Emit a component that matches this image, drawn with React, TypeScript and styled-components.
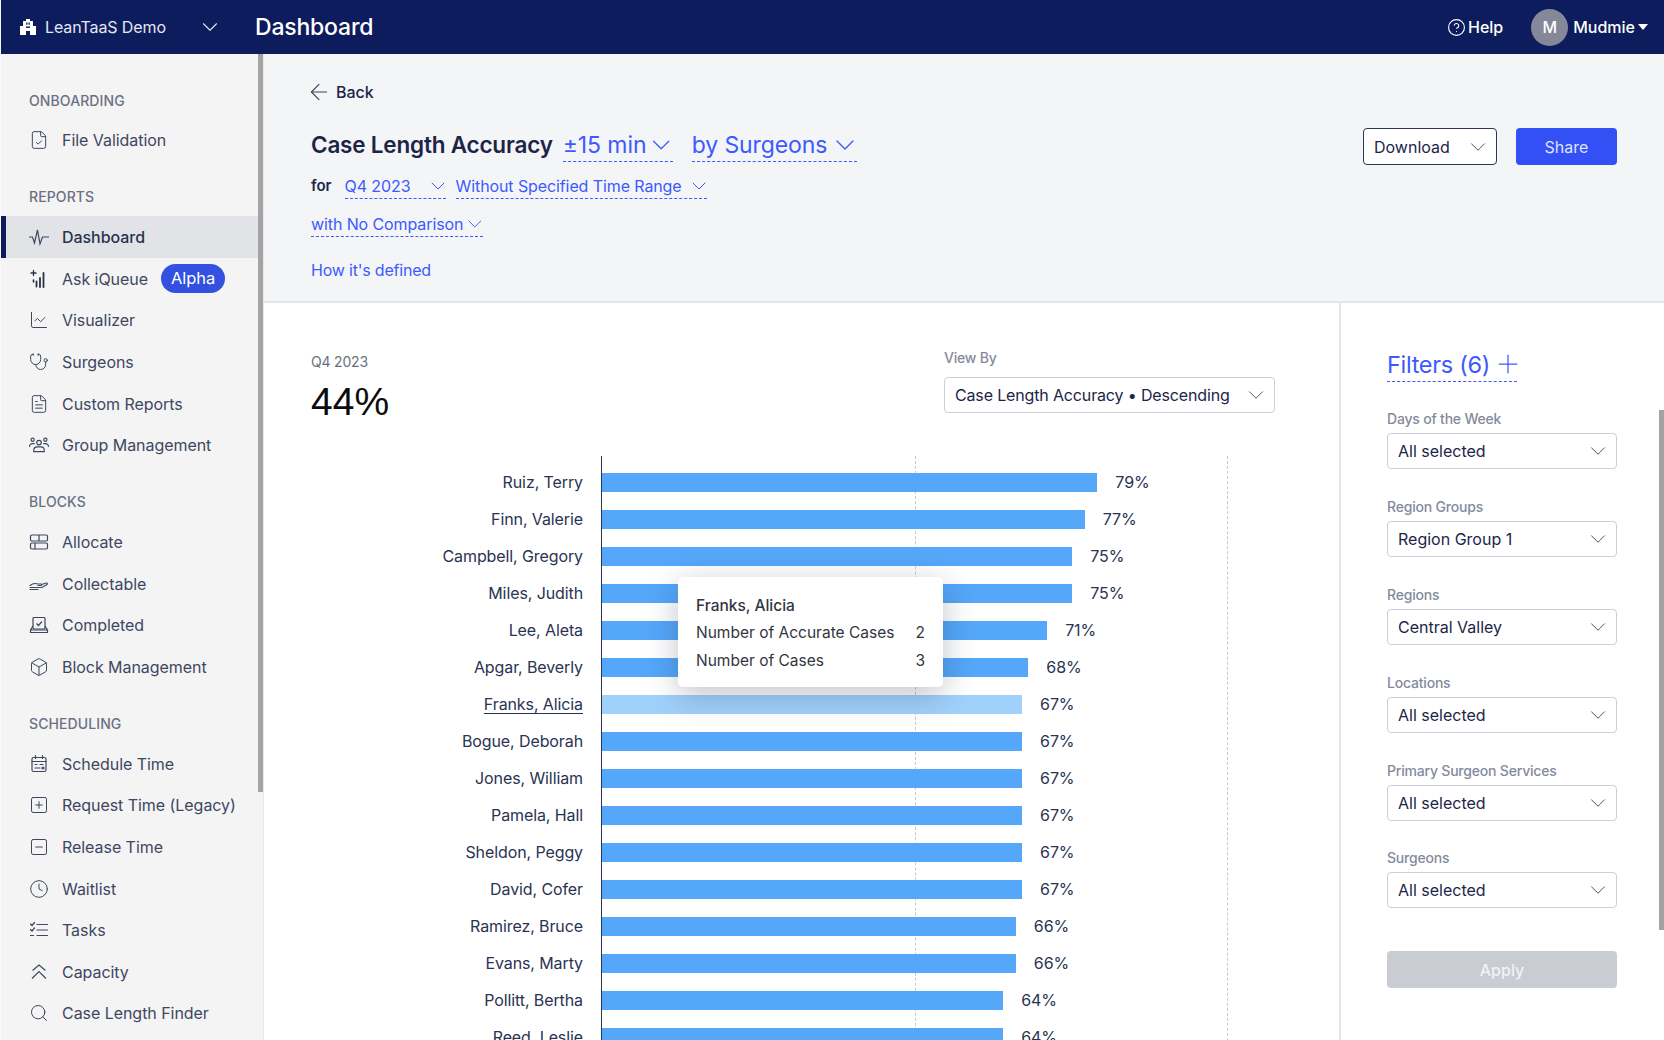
import styled, { createGlobalStyle } from "styled-components";
import {
  ArrowLeft,
  Box,
  ChartLine,
  ChevronDown,
  CircleHelp,
  Clock,
  FileCheck,
  FileText,
  Plus,
  Search,
  SquareMinus,
  SquarePlus,
  Stethoscope,
} from "lucide-react";
import type { ReactNode } from "react";

const PX_PER_PERCENT = 6.27;

const GlobalStyle = createGlobalStyle`
  html, body {
    margin: 0;
    padding: 0;
    background: #fff;
    font-family: "Inter", "Liberation Sans", sans-serif;
    color: #1c2547;
  }
  * {
    box-sizing: border-box;
  }
`;

const Page = styled.div`
  display: flex;
  flex-direction: column;
  width: 1664px;
  height: 1040px;
  overflow: hidden;
  position: relative;
`;

const TopBar = styled.header`
  display: flex;
  align-items: center;
  height: 54px;
  flex: none;
  background: #0d1c5c;
  color: #fff;
  border-left: 1px solid #f4f4f5;
`;

const OrgPicker = styled.div`
  display: flex;
  align-items: center;
  width: 254px;
  padding: 0 32px 0 18px;
  font-size: 16px;
  color: #e4e7f2;
  svg:last-child {
    margin-left: auto;
  }
`;

const OrgName = styled.span`
  margin-left: 8px;
  letter-spacing: -0.1px;
`;

const PageTitle = styled.div`
  font-size: 23px;
  font-weight: 500;
  letter-spacing: -0.2px;
`;

const TopRight = styled.div`
  margin-left: auto;
  display: flex;
  align-items: center;
  padding-right: 16px;
  font-size: 16px;
  font-weight: 500;
`;

const HelpLink = styled.div`
  display: flex;
  align-items: center;
  gap: 2px;
  margin-right: 28px;
`;

const Avatar = styled.div`
  width: 37px;
  height: 37px;
  border-radius: 50%;
  background: #858898;
  display: flex;
  align-items: center;
  justify-content: center;
  margin-right: 5px;
`;

const Caret = styled.span`
  width: 0;
  height: 0;
  margin-left: 3px;
  border-left: 5px solid transparent;
  border-right: 5px solid transparent;
  border-top: 6px solid #fff;
`;

const Body = styled.div`
  display: flex;
  flex: 1;
  min-height: 0;
`;

const Sidebar = styled.nav`
  width: 258px;
  flex: none;
  background: #f4f4f5;
  border-left: 1px solid #fbfbfb;
  padding-top: 36.5px;
  overflow: hidden;
`;

const SideScroll = styled.div`
  width: 6px;
  flex: none;
  background: #f4f4f5;
  border-right: 1px solid #e4e8ef;
`;

const SideThumb = styled.div`
  width: 5px;
  height: 738px;
  background: #a3a3a3;
`;

const NavSection = styled.section`
  margin-bottom: 26.3px;
`;

const NavLabel = styled.div`
  height: 20px;
  line-height: 20px;
  margin: 0 0 9px 28px;
  font-size: 14px;
  font-weight: 500;
  color: #6b7184;
  letter-spacing: 0.1px;
`;

const NavRow = styled.div<{ $active?: boolean }>`
  display: flex;
  align-items: center;
  height: 41.6px;
  padding-left: 28px;
  gap: 13px;
  font-size: 16px;
  letter-spacing: -0.05px;
  color: ${(p) => (p.$active ? "#2a3350" : "#3f475f")};
  font-weight: ${(p) => (p.$active ? 500 : 400)};
  background: ${(p) => (p.$active ? "#e1e3e6" : "transparent")};
  box-shadow: ${(p) => (p.$active ? "inset 5px 0 0 #0d1c5c" : "none")};
  svg {
    flex: none;
    color: #3f475f;
  }
`;

const AlphaBadge = styled.span`
  padding: 0 10px;
  height: 29px;
  line-height: 29px;
  border-radius: 15px;
  font-size: 16.5px;
  background: #3350e0;
  color: #fff;
`;

const Main = styled.main`
  flex: 1;
  min-width: 0;
  display: flex;
  flex-direction: column;
`;

const ReportHeader = styled.div`
  height: 249px;
  flex: none;
  background: #f4f5f7;
  border-bottom: 2px solid #e3e5e9;
  padding: 26px 47px 0;
  display: flex;
  flex-direction: column;
`;

const BackLink = styled.div`
  display: flex;
  align-items: center;
  gap: 4px;
  height: 24px;
  font-size: 16px;
  font-weight: 500;
  color: #1c2547;
  svg {
    color: #3a4259;
    margin-left: -5px;
  }
`;

const TitleBar = styled.div`
  display: flex;
  justify-content: space-between;
  align-items: flex-start;
  margin-top: 20px;
`;

const TitleLine = styled.div`
  display: flex;
  align-items: center;
  height: 44px;
  gap: 18px;
`;

const ReportTitle = styled.h1`
  margin: -3px -8px 0 0;
  font-size: 22.5px;
  font-weight: 600;
  letter-spacing: -0.2px;
  color: #1c2547;
`;

const Dropdown = styled.div<{ $size: number; $width: number }>`
  display: flex;
  align-items: center;
  justify-content: space-between;
  font-size: ${(p) => p.$size}px;
  color: #3d5afe;
  border-bottom: 1px dashed #3d5afe;
  width: ${(p) => p.$width}px;
  padding-bottom: 2px;
  letter-spacing: -0.1px;
  white-space: nowrap;
  svg {
    margin: -8px -4px -8px 0;
  }
`;

const SubLine = styled.div`
  display: flex;
  align-items: center;
  gap: 10px;
  height: 30px;
  margin-top: 4.5px;
`;

const ForText = styled.span`
  font-size: 15px;
  font-weight: 600;
  margin-right: 3px;
  margin-top: -4px;
`;

const CompareLine = styled.div`
  display: flex;
  margin-top: 11px;
`;

const DefinedLink = styled.div`
  margin-top: 23px;
  font-size: 16px;
  color: #3d5afe;
  letter-spacing: -0.2px;
`;

const Actions = styled.div`
  display: flex;
  gap: 19px;
  margin-top: 4px;
`;

const DownloadButton = styled.div`
  width: 134px;
  height: 37px;
  background: #fff;
  border: 1px solid #2d3658;
  border-radius: 4px;
  display: flex;
  align-items: center;
  justify-content: space-between;
  padding: 0 5px 0 10px;
  font-size: 16px;
  color: #1c2547;
  svg {
    color: #4a5168;
  }
`;

const ShareButton = styled.div`
  width: 101px;
  height: 37px;
  background: #3350f5;
  border-radius: 4px;
  color: #dfe4ff;
  font-size: 16px;
  display: flex;
  align-items: center;
  justify-content: center;
`;

const Content = styled.div`
  flex: 1;
  min-height: 0;
  display: flex;
`;

const ChartPanel = styled.div`
  width: 1075px;
  flex: none;
  padding: 46px 64px 0 47px;
  background: #fff;
  overflow: hidden;
`;

const ChartHead = styled.div`
  display: flex;
  justify-content: space-between;
`;

const KpiLabel = styled.div`
  margin-top: 4px;
  height: 18px;
  line-height: 18px;
  font-size: 14px;
  color: #6b7080;
  letter-spacing: -0.2px;
`;

const KpiValue = styled.div`
  margin-top: 7px;
  height: 46px;
  line-height: 48px;
  font-family: "Liberation Sans", sans-serif;
  font-size: 39px;
  color: #0c0c10;
`;

const ViewBy = styled.div`
  width: 331px;
`;

const FieldLabel = styled.div`
  height: 18px;
  line-height: 18px;
  font-size: 14px;
  font-weight: 500;
  color: #858a9e;
  letter-spacing: -0.2px;
`;

const SelectBox = styled.div`
  display: flex;
  align-items: center;
  justify-content: space-between;
  height: 36px;
  padding: 0 5px 0 10px;
  background: #fff;
  border: 1px solid #ccd0da;
  border-radius: 4px;
  font-size: 16px;
  color: #1c2547;
  svg {
    color: #4a5168;
  }
`;

const ViewSelect = styled(SelectBox)`
  margin-top: 10px;
  letter-spacing: -0.15px;
`;

const Chart = styled.div`
  position: relative;
  margin-top: 32px;
  padding-top: 7.5px;
`;

const Plot = styled.div`
  position: absolute;
  left: 290px;
  top: 0;
  bottom: 0;
  width: 626px;
  border-left: 1px solid #2c3557;
`;

const GridLine = styled.div<{ $at: number }>`
  position: absolute;
  top: 0;
  bottom: 0;
  left: ${(p) => p.$at}%;
  border-left: 1px dashed #c9c9c9;
`;

const ChartRow = styled.div`
  position: relative;
  display: flex;
  align-items: center;
  height: 37px;
`;

const RowName = styled.div<{ $hover?: boolean }>`
  width: 272px;
  flex: none;
  text-align: right;
  font-size: 16px;
  letter-spacing: -0.1px;
  color: #2a3352;
  white-space: nowrap;
  text-decoration: ${(p) => (p.$hover ? "underline" : "none")};
  text-underline-offset: 3px;
`;

const BarTrack = styled.div`
  margin-left: 19px;
  display: flex;
  align-items: center;
`;

const Bar = styled.div<{ $hover?: boolean }>`
  height: 19px;
  background: ${(p) => (p.$hover ? "#a0d1fb" : "#54a7f9")};
`;

const BarValue = styled.div`
  margin-left: 18px;
  font-size: 16px;
  letter-spacing: -0.1px;
  color: #2a3352;
`;

const Tooltip = styled.div`
  position: absolute;
  left: 367px;
  top: 121px;
  width: 265px;
  height: 110px;
  padding: 17px 18px;
  background: #fff;
  border-radius: 5px;
  box-shadow: 0 8px 32px rgba(30, 40, 70, 0.28);
  font-size: 15.5px;
  color: #33363f;
`;

const TipTitle = styled.div`
  font-weight: 500;
  height: 24px;
  line-height: 24px;
  margin-bottom: 1px;
`;

const TipRow = styled.div`
  display: flex;
  justify-content: space-between;
  height: 27.5px;
  line-height: 28px;
`;

const FilterPanel = styled.aside`
  flex: 1;
  border-left: 2px solid #e4e6ee;
  padding: 44px 47px 0 46px;
  background: #fff;
`;

const FilterTitle = styled.div`
  display: inline-flex;
  align-items: center;
  gap: 3px;
  height: 35px;
  border-bottom: 1px dashed #3d5afe;
  font-size: 23.5px;
  color: #3d5afe;
  letter-spacing: -0.3px;
  margin-bottom: 28px;
  svg {
    margin: -4px -6px -4px 0;
  }
`;

const FilterField = styled.div`
  margin-bottom: 28.9px;
`;

const FilterSelect = styled(SelectBox)`
  margin-top: 5px;
`;

const ApplyButton = styled.div`
  margin-top: 43px;
  height: 37px;
  border-radius: 4px;
  background: #c9ccd2;
  color: #f2f3f5;
  font-size: 16px;
  font-weight: 500;
  display: flex;
  align-items: center;
  justify-content: center;
`;

const PageScrollThumb = styled.div`
  position: absolute;
  right: 0;
  top: 410px;
  width: 5px;
  height: 520px;
  background: #a3a3a3;
`;

function BuildingLogo() {
  return (
    <svg width="18" height="18" viewBox="0 0 18 18" fill="#fff">
      <path d="M1 17V8h3V3h3V1h4v2h3v5h3v9h-6v-4H7v4H1z" />
      <rect x="7.2" y="4.5" width="1.3" height="2.2" fill="#0d1c5c" />
      <rect x="9.5" y="4.5" width="1.3" height="2.2" fill="#0d1c5c" />
      <rect x="7" y="8.5" width="4" height="1.4" fill="#0d1c5c" />
    </svg>
  );
}

function PulseIcon() {
  return (
    <svg width="20" height="20" viewBox="0 0 20 20" fill="none" stroke="currentColor" strokeWidth="1.2">
      <path d="M0 10h3.5l2 6 3-13 2.500 14 2.500-7H20" />
    </svg>
  );
}

function AskIcon() {
  return (
    <svg width="20" height="20" viewBox="0 0 20 20" fill="none" stroke="#2a3148" strokeLinecap="round">
      <path d="M4.5 1.5v5M2 4h5" strokeWidth="1.3" />
      <path d="M7.5 17.5v-5M11 18v-9M14.5 18V4" strokeWidth="1.8" />
      <path d="M4.5 11v2" strokeWidth="1.6" />
    </svg>
  );
}

function PeopleIcon() {
  return (
    <svg width="20" height="20" viewBox="0 0 21 20" fill="none" stroke="currentColor" strokeWidth="1.2" strokeLinecap="round">
      <circle cx="10.5" cy="7.5" r="2.4" />
      <circle cx="3.8" cy="4.5" r="1.7" />
      <circle cx="17.2" cy="4.5" r="1.7" />
      <path d="M5 17v-1.5a3.5 3.5 0 0 1 3.5-3.5h4a3.5 3.5 0 0 1 3.5 3.500V17H5z" />
      <path d="M.6 11.5a3 3 0 0 1 3-3h2M20.400 11.5a3 3 0 0 0-3-3h-2" />
    </svg>
  );
}

function AllocateIcon() {
  return (
    <svg width="20" height="20" viewBox="0 0 20 20" fill="none" stroke="currentColor" strokeWidth="1.2">
      <rect x="1.5" y="3" width="17" height="6" rx="1.2" />
      <rect x="1.5" y="11" width="17" height="6" rx="1.2" />
      <path d="M10 3v6M6 11v6" />
    </svg>
  );
}

function HandIcon() {
  return (
    <svg width="20" height="20" viewBox="0 0 20 20" fill="none" stroke="currentColor" strokeWidth="1.1" strokeLinecap="round">
      <path d="M1 11.5c3-2.5 5-2.5 8-1.5h3c1 0 1 1.5 0 1.5H9" />
      <path d="M12.5 10.5l5-1.5c1-.2 1.3 1 .5 1.5l-5 3H1" />
      <path d="M1 15.5h8" />
    </svg>
  );
}

function CompletedIcon() {
  return (
    <svg width="20" height="20" viewBox="0 0 20 20" fill="none" stroke="currentColor" strokeWidth="1.2">
      <rect x="4" y="2.5" width="12" height="11.5" rx="1" />
      <path d="M7.5 8.5l2 2 3.5-4" />
      <path d="M4 11L1.500 15v2.5h17V15L16 11M1.5 15h17" />
    </svg>
  );
}

function ScheduleIcon() {
  return (
    <svg width="20" height="20" viewBox="0 0 20 20" fill="none" stroke="currentColor" strokeWidth="1.2" strokeLinecap="round">
      <rect x="3" y="3.5" width="14" height="14" rx="1.5" />
      <path d="M6.5 1.5v3M13.5 1.5v3M3 7.5h14M6 10.5h2M11 10.5h3M6 14h5" />
      <circle cx="14" cy="14" r="1" />
    </svg>
  );
}

function TasksIcon() {
  return (
    <svg width="20" height="20" viewBox="0 0 20 20" fill="none" stroke="currentColor" strokeWidth="1.2" strokeLinecap="round">
      <path d="M8 4.5h10.5M8 10h10.5M8 15.5h10.5" />
      <path d="M1.5 4L3 5.5l2.5-3M1.5 9.5L3 11l2.500-3M1.5 15.5h3" />
    </svg>
  );
}

function CapacityIcon() {
  return (
    <svg width="20" height="20" viewBox="0 0 20 20" fill="none" stroke="currentColor" strokeWidth="1.2">
      <path d="M3.5 8.5L10 3l6.500 5.500M3 16.500l7-7 7 7" />
    </svg>
  );
}

const iconProps = { size: 20, strokeWidth: 1.2 };

const navSections: { title: string; items: { label: string; icon: ReactNode; active?: boolean; badge?: string }[] }[] = [
  { title: "ONBOARDING", items: [{ label: "File Validation", icon: <FileCheck {...iconProps} /> }] },
  {
    title: "REPORTS",
    items: [
      { label: "Dashboard", icon: <PulseIcon />, active: true },
      { label: "Ask iQueue", icon: <AskIcon />, badge: "Alpha" },
      { label: "Visualizer", icon: <ChartLine {...iconProps} /> },
      { label: "Surgeons", icon: <Stethoscope {...iconProps} /> },
      { label: "Custom Reports", icon: <FileText {...iconProps} /> },
      { label: "Group Management", icon: <PeopleIcon /> },
    ],
  },
  {
    title: "BLOCKS",
    items: [
      { label: "Allocate", icon: <AllocateIcon /> },
      { label: "Collectable", icon: <HandIcon /> },
      { label: "Completed", icon: <CompletedIcon /> },
      { label: "Block Management", icon: <Box {...iconProps} /> },
    ],
  },
  {
    title: "SCHEDULING",
    items: [
      { label: "Schedule Time", icon: <ScheduleIcon /> },
      { label: "Request Time (Legacy)", icon: <SquarePlus {...iconProps} /> },
      { label: "Release Time", icon: <SquareMinus {...iconProps} /> },
      { label: "Waitlist", icon: <Clock {...iconProps} /> },
      { label: "Tasks", icon: <TasksIcon /> },
      { label: "Capacity", icon: <CapacityIcon /> },
      { label: "Case Length Finder", icon: <Search {...iconProps} /> },
    ],
  },
];

const surgeons = [
  { name: "Ruiz, Terry", value: 79 },
  { name: "Finn, Valerie", value: 77 },
  { name: "Campbell, Gregory", value: 75 },
  { name: "Miles, Judith", value: 75 },
  { name: "Lee, Aleta", value: 71 },
  { name: "Apgar, Beverly", value: 68 },
  { name: "Franks, Alicia", value: 67, hover: true },
  { name: "Bogue, Deborah", value: 67 },
  { name: "Jones, William", value: 67 },
  { name: "Pamela, Hall", value: 67 },
  { name: "Sheldon, Peggy", value: 67 },
  { name: "David, Cofer", value: 67 },
  { name: "Ramirez, Bruce", value: 66 },
  { name: "Evans, Marty", value: 66 },
  { name: "Pollitt, Bertha", value: 64 },
  { name: "Reed, Leslie", value: 64 },
];

const filters = [
  { label: "Days of the Week", value: "All selected" },
  { label: "Region Groups", value: "Region Group 1" },
  { label: "Regions", value: "Central Valley" },
  { label: "Locations", value: "All selected" },
  { label: "Primary Surgeon Services", value: "All selected" },
  { label: "Surgeons", value: "All selected" },
];

export default function App() {
  return (
    <Page>
      <GlobalStyle />
      <TopBar>
        <OrgPicker>
          <BuildingLogo />
          <OrgName>LeanTaaS Demo</OrgName>
          <ChevronDown size={26} strokeWidth={1} />
        </OrgPicker>
        <PageTitle>Dashboard</PageTitle>
        <TopRight>
          <HelpLink>
            <CircleHelp size={19} strokeWidth={1.4} />
            Help
          </HelpLink>
          <Avatar>M</Avatar>
          Mudmie
          <Caret />
        </TopRight>
      </TopBar>
      <Body>
        <Sidebar>
          {navSections.map((section) => (
            <NavSection key={section.title}>
              <NavLabel>{section.title}</NavLabel>
              {section.items.map((item) => (
                <NavRow key={item.label} $active={item.active}>
                  {item.icon}
                  {item.label}
                  {item.badge && <AlphaBadge>{item.badge}</AlphaBadge>}
                </NavRow>
              ))}
            </NavSection>
          ))}
        </Sidebar>
        <SideScroll>
          <SideThumb />
        </SideScroll>
        <Main>
          <ReportHeader>
            <BackLink>
              <ArrowLeft size={26} strokeWidth={1} />
              Back
            </BackLink>
            <TitleBar>
              <div>
                <TitleLine>
                  <ReportTitle>Case Length Accuracy</ReportTitle>
                  <Dropdown $size={23} $width={110}>
                    ±15 min <ChevronDown size={32} strokeWidth={1} />
                  </Dropdown>
                  <Dropdown $size={23} $width={165} style={{ marginLeft: 1 }}>
                    by Surgeons <ChevronDown size={32} strokeWidth={1} />
                  </Dropdown>
                </TitleLine>
                <SubLine>
                  <ForText>for</ForText>
                  <Dropdown $size={16} $width={101}>
                    Q4 2023 <ChevronDown size={24} strokeWidth={1} />
                  </Dropdown>
                  <Dropdown $size={16} $width={251}>
                    Without Specified Time Range <ChevronDown size={24} strokeWidth={1} />
                  </Dropdown>
                </SubLine>
                <CompareLine>
                  <Dropdown $size={16} $width={172}>
                    with No Comparison <ChevronDown size={24} strokeWidth={1} />
                  </Dropdown>
                </CompareLine>
                <DefinedLink>How it's defined</DefinedLink>
              </div>
              <Actions>
                <DownloadButton>
                  Download <ChevronDown size={26} strokeWidth={0.9} />
                </DownloadButton>
                <ShareButton>Share</ShareButton>
              </Actions>
            </TitleBar>
          </ReportHeader>
          <Content>
            <ChartPanel>
              <ChartHead>
                <div>
                  <KpiLabel>Q4 2023</KpiLabel>
                  <KpiValue>44%</KpiValue>
                </div>
                <ViewBy>
                  <FieldLabel>View By</FieldLabel>
                  <ViewSelect>
                    Case Length Accuracy • Descending
                    <ChevronDown size={26} strokeWidth={0.9} />
                  </ViewSelect>
                </ViewBy>
              </ChartHead>
              <Chart>
                <Plot>
                  <GridLine $at={50} />
                  <GridLine $at={100} />
                </Plot>
                {surgeons.map((s) => (
                  <ChartRow key={s.name}>
                    <RowName $hover={s.hover}>{s.name}</RowName>
                    <BarTrack>
                      <Bar $hover={s.hover} style={{ width: s.value * PX_PER_PERCENT }} />
                      <BarValue>{s.value}%</BarValue>
                    </BarTrack>
                  </ChartRow>
                ))}
                <Tooltip>
                  <TipTitle>Franks, Alicia</TipTitle>
                  <TipRow>
                    <span>Number of Accurate Cases</span>
                    <span>2</span>
                  </TipRow>
                  <TipRow>
                    <span>Number of Cases</span>
                    <span>3</span>
                  </TipRow>
                </Tooltip>
              </Chart>
            </ChartPanel>
            <FilterPanel>
              <FilterTitle>
                Filters (6) <Plus size={30} strokeWidth={1} />
              </FilterTitle>
              {filters.map((f) => (
                <FilterField key={f.label}>
                  <FieldLabel>{f.label}</FieldLabel>
                  <FilterSelect>
                    {f.value}
                    <ChevronDown size={26} strokeWidth={0.9} />
                  </FilterSelect>
                </FilterField>
              ))}
              <ApplyButton>Apply</ApplyButton>
            </FilterPanel>
          </Content>
        </Main>
      </Body>
      <PageScrollThumb />
    </Page>
  );
}
